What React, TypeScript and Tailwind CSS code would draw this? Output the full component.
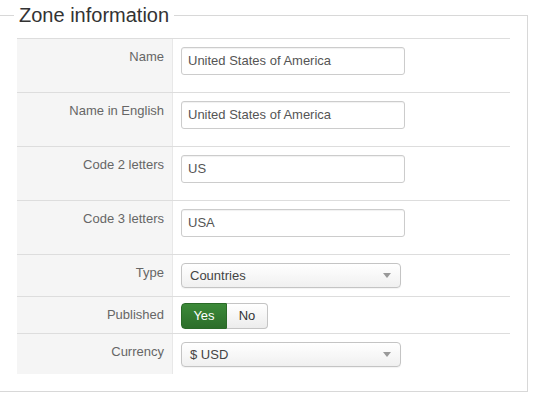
import React from "react";

type FieldRow = {
  label: string;
  h: string;
  kind: "text" | "select" | "toggle";
  value?: string;
};

const rows: FieldRow[] = [
  { label: "Name", h: "h-[54px]", kind: "text", value: "United States of America" },
  { label: "Name in English", h: "h-[54px]", kind: "text", value: "United States of America" },
  { label: "Code 2 letters", h: "h-[54px]", kind: "text", value: "US" },
  { label: "Code 3 letters", h: "h-[54px]", kind: "text", value: "USA" },
  { label: "Type", h: "h-[42px]", kind: "select", value: "Countries" },
  { label: "Published", h: "h-[37px]", kind: "toggle" },
  { label: "Currency", h: "h-[41px]", kind: "select", value: "$ USD" },
];

const TextInput = ({ value }: { value: string }) => (
  <div className="w-[224px] h-[28px] border border-[#cccccc] rounded-[3px] bg-white px-[6px] flex items-center text-[13px] text-[#555555] shadow-[inset_0_1px_1px_rgba(0,0,0,0.06)]">
    {value}
  </div>
);

const SelectBox = ({ value }: { value: string }) => (
  <div className="w-[220px] h-[25px] border border-[#c4c4c4] rounded-[4px] bg-gradient-to-b from-white to-[#f0f0f0] pl-[8px] pr-[9px] flex items-center justify-between text-[13px] text-[#444444] shadow-[0_1px_1px_rgba(0,0,0,0.05)]">
    <span>{value}</span>
    <span className="w-0 h-0 border-l-[4px] border-r-[4px] border-t-[5px] border-l-transparent border-r-transparent border-t-[#999999]" />
  </div>
);

const Toggle = () => (
  <div className="flex h-[26px] text-[13px]">
    <div className="w-[46px] flex items-center justify-center text-white rounded-l-[4px] bg-gradient-to-b from-[#3c8a39] to-[#2c6e2a] border border-[#2a6a28]">
      Yes
    </div>
    <div className="w-[41px] flex items-center justify-center text-[#333333] rounded-r-[4px] bg-gradient-to-b from-white to-[#ececec] border border-l-0 border-[#c4c4c4]">
      No
    </div>
  </div>
);

export default function App() {
  return (
    <div className="w-[539px] h-[405px] bg-white overflow-hidden pt-[1px] font-['Liberation_Sans',Arial,sans-serif]">
      <fieldset className="ml-[-1px] w-[529px] border border-[#d8d8d8] pl-[17px] pr-[17px] pb-[17px]">
        <legend className="ml-[-3px] px-[5px] text-[20px] leading-[28px] text-[#333333]">
          Zone information
        </legend>
        <div className="mt-[9px]">
          {rows.map((r) => (
            <div key={r.label} className={`flex border-t border-[#dddddd] ${r.h}`}>
              <div className="w-[156px] shrink-0 bg-[#f5f5f5] border-r border-[#e8e8e8] pr-[8px] pt-[9px] text-right text-[13px] leading-[18px] text-[#666666]">
                {r.label}
              </div>
              <div
                className={`flex-1 pl-[8px] ${
                  r.kind === "toggle" ? "pt-[6px]" : "pt-[8px]"
                }`}
              >
                {r.kind === "text" && <TextInput value={r.value ?? ""} />}
                {r.kind === "select" && <SelectBox value={r.value ?? ""} />}
                {r.kind === "toggle" && <Toggle />}
              </div>
            </div>
          ))}
        </div>
      </fieldset>
    </div>
  );
}
